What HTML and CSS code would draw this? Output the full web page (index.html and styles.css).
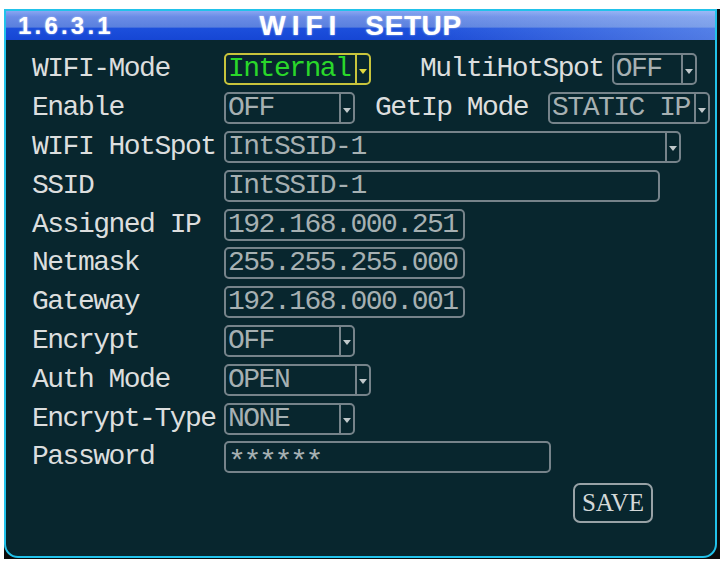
FILE: index.html
```html
<!DOCTYPE html>
<html>
<head>
<meta charset="utf-8">
<link rel="stylesheet" href="styles.css">
</head>
<body>
<div class="screen">
  <div class="frame">
    <div class="titlebar">
      <span class="menu-no">1.6.3.1</span>
      <span class="title"><span class="t-wifi">WIFI</span><span class="t-setup">SETUP</span></span>
    </div>
    <div class="body">
      <div class="row">
        <span class="label">WIFI-Mode</span>
        <div class="box select w147 active"><span class="val green">Internal</span><span class="arr"></span></div>
        <span class="label side ml49">MultiHotSpot</span>
        <div class="box select w85 ml8"><span class="val">OFF</span><span class="arr"></span></div>
      </div>
      <div class="row">
        <span class="label">Enable</span>
        <div class="box select w131"><span class="val">OFF</span><span class="arr"></span></div>
        <span class="label side ml20">GetIp Mode</span>
        <div class="box select w162 ml20"><span class="val">STATIC IP</span><span class="arr"></span></div>
      </div>
      <div class="row">
        <span class="label">WIFI HotSpot</span>
        <div class="box select w457"><span class="val">IntSSID-1</span><span class="arr"></span></div>
      </div>
      <div class="row">
        <span class="label">SSID</span>
        <div class="box w436"><span class="val">IntSSID-1</span></div>
      </div>
      <div class="row">
        <span class="label">Assigned IP</span>
        <div class="box w241"><span class="val">192.168.000.251</span></div>
      </div>
      <div class="row">
        <span class="label">Netmask</span>
        <div class="box w241"><span class="val">255.255.255.000</span></div>
      </div>
      <div class="row">
        <span class="label">Gateway</span>
        <div class="box w241"><span class="val">192.168.000.001</span></div>
      </div>
      <div class="row">
        <span class="label">Encrypt</span>
        <div class="box select w131"><span class="val">OFF</span><span class="arr"></span></div>
      </div>
      <div class="row">
        <span class="label">Auth Mode</span>
        <div class="box select w147"><span class="val">OPEN</span><span class="arr"></span></div>
      </div>
      <div class="row">
        <span class="label">Encrypt-Type</span>
        <div class="box select w131"><span class="val">NONE</span><span class="arr"></span></div>
      </div>
      <div class="row">
        <span class="label">Password</span>
        <div class="box w327"><span class="val stars">******</span></div>
      </div>
      <div class="actions">
        <button class="save">SAVE</button>
      </div>
    </div>
  </div>
</div>
</body>
</html>
```

FILE: styles.css
```css
html, body {
  margin: 0;
  padding: 0;
  background: #ffffff;
}

.screen {
  margin: 9px 0 0 4px;
  width: 716px;
  height: 550px;
  background: #0c0c0c;
  box-sizing: border-box;
  padding: 0 3px 1px 0;
}

.frame {
  width: 713px;
  height: 549px;
  box-sizing: border-box;
  border: 2px solid #22c2ea;
  border-radius: 0 0 14px 14px;
  background: #08262e;
  overflow: hidden;
  display: flex;
  flex-direction: column;
}

.titlebar {
  position: relative;
  height: 29px;
  flex: none;
  background:
    linear-gradient(90deg, rgba(255,255,255,0) 0%, rgba(255,255,255,0) 55%, rgba(190,220,255,0.35) 100%),
    linear-gradient(180deg, #8aa6f2 0%, #6a8ce6 20%, #5a80de 55%, #1c4fdc 60%, #1646d4 100%);
  display: flex;
  align-items: center;
  justify-content: center;
  font-family: "Liberation Sans", Arial, sans-serif;
  font-weight: bold;
  color: #ffffff;
  text-shadow: 0 0 2px rgba(220,235,255,0.8);
}

.menu-no {
  position: absolute;
  left: 12px;
  top: 1px;
  font-size: 24px;
  line-height: 28px;
  letter-spacing: 3.2px;
}

.title {
  font-size: 28px;
  line-height: 29px;
  white-space: pre;
  margin-left: 0;
}

.t-wifi {
  letter-spacing: 6px;
}

.t-setup {
  margin-left: 23px;
  letter-spacing: 0.6px;
}

.body {
  padding: 10px 0 0 26px;
  font-family: "Liberation Mono", "Courier New", monospace;
  font-size: 28px;
  letter-spacing: -1.5px;
}

.row {
  height: 38.8px;
  display: flex;
  align-items: center;
}

.label {
  width: 192px;
  flex: none;
  color: #dcdede;
  white-space: pre;
  line-height: 32px;
}

.label.side {
  width: auto;
}

.box {
  height: 32px;
  box-sizing: border-box;
  border: 2px solid #76838a;
  border-radius: 5px;
  display: flex;
  align-items: center;
  flex: none;
}

.box.active {
  border-color: #c8c43c;
}

.val {
  flex: 1;
  padding-left: 2px;
  color: #a6b0b2;
  white-space: pre;
  line-height: 28px;
}

.val.green {
  color: #2ad82a;
}

.val.stars {
  font-size: 30px;
  letter-spacing: -2.5px;
  margin-top: 12px;
  line-height: 28px;
}

.arr {
  width: 12px;
  height: 100%;
  border-left: 2px solid #76838a;
  display: flex;
  align-items: center;
  justify-content: center;
  flex: none;
}

.arr::after {
  content: "";
  width: 0;
  height: 0;
  margin-top: 4px;
  border-left: 4px solid transparent;
  border-right: 4px solid transparent;
  border-top: 5px solid #c0c8ca;
}

.active .arr {
  border-left-color: #c8c43c;
}

.active .arr::after {
  border-top-color: #e0d840;
}

.w85 { width: 85px; }
.w131 { width: 131px; }
.w147 { width: 147px; }
.w162 { width: 162px; }
.w241 { width: 241px; }
.w327 { width: 327px; }
.w436 { width: 436px; }
.w457 { width: 457px; }

.ml8 { margin-left: 8px; }
.ml20 { margin-left: 20px; }
.ml49 { margin-left: 49px; }

.actions {
  display: flex;
  padding-left: 541px;
  margin-top: 6px;
}

.save {
  width: 80px;
  height: 40px;
  box-sizing: border-box;
  border: 2px solid #98a2a6;
  border-radius: 7px;
  background: transparent;
  color: #d4d8d8;
  font-family: "Liberation Serif", "Times New Roman", serif;
  font-size: 25px;
  letter-spacing: 0;
  padding: 0;
  display: flex;
  align-items: center;
  justify-content: center;
}
```
